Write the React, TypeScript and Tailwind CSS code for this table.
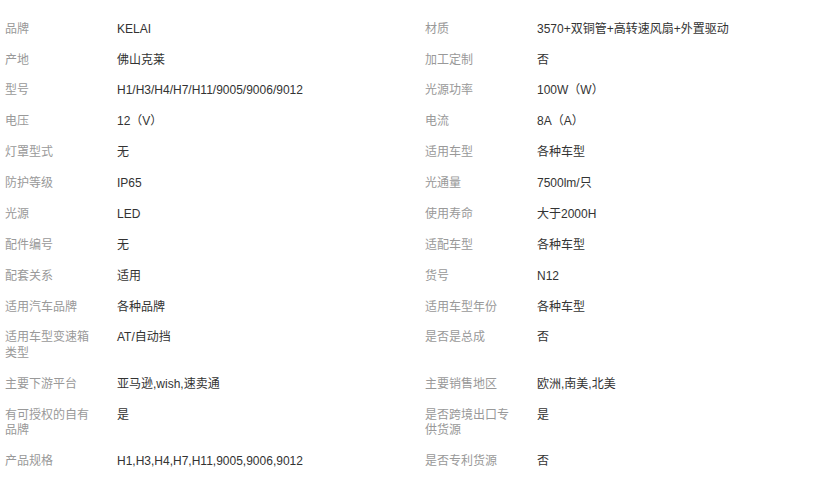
import React from "react";

const rows: [string, string, string, string][] = [
  ["品牌", "KELAI", "材质", "3570+双铜管+高转速风扇+外置驱动"],
  ["产地", "佛山克莱", "加工定制", "否"],
  ["型号", "H1/H3/H4/H7/H11/9005/9006/9012", "光源功率", "100W（W）"],
  ["电压", "12（V）", "电流", "8A（A）"],
  ["灯罩型式", "无", "适用车型", "各种车型"],
  ["防护等级", "IP65", "光通量", "7500lm/只"],
  ["光源", "LED", "使用寿命", "大于2000H"],
  ["配件编号", "无", "适配车型", "各种车型"],
  ["配套关系", "适用", "货号", "N12"],
  ["适用汽车品牌", "各种品牌", "适用车型年份", "各种车型"],
  ["适用车型变速箱类型", "AT/自动挡", "是否是总成", "否"],
  ["主要下游平台", "亚马逊,wish,速卖通", "主要销售地区", "欧洲,南美,北美"],
  ["有可授权的自有品牌", "是", "是否跨境出口专供货源", "是"],
  ["产品规格", "H1,H3,H4,H7,H11,9005,9006,9012", "是否专利货源", "否"],
];

export default function App() {
  return (
    <div
      className="w-[820px] h-[480px] bg-white overflow-hidden pt-[14px] text-[12px] leading-[15.6px]"
      style={{ fontFamily: '"Liberation Sans", Arial, "Noto Sans CJK SC", sans-serif' }}
    >
      <div className="grid grid-cols-[117px_303px_117px_1fr]">
        {rows.map((r, i) => (
          <React.Fragment key={i}>
            <div className="pl-[5px] pr-[20px] py-[7.65px] text-[#999999] break-all">{r[0]}</div>
            <div className="py-[7.65px] text-[#333333]">{r[1]}</div>
            <div className="pl-[5px] pr-[20px] py-[7.65px] text-[#999999] break-all">{r[2]}</div>
            <div className="py-[7.65px] text-[#333333]">{r[3]}</div>
          </React.Fragment>
        ))}
      </div>
    </div>
  );
}
